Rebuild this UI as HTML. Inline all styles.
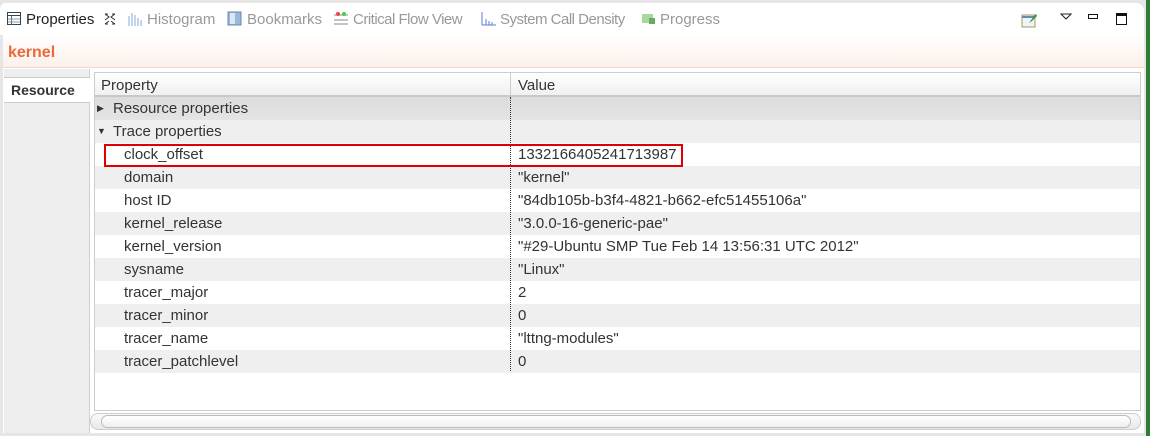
<!DOCTYPE html>
<html><head><meta charset="utf-8"><style>
*{margin:0;padding:0;box-sizing:border-box}
body{width:1150px;height:436px;background:#e6e6e6;font-family:"Liberation Sans",sans-serif;font-size:15px;color:#333;position:relative;overflow:hidden}
.panel{position:absolute;left:3px;top:3px;width:1141px;height:430px;background:#fff;border-radius:0 8px 0 0}
.green{position:absolute;left:1146px;top:0;width:4px;height:436px;background:#2e7d32}
.tab{position:absolute;top:11px;font-size:15px;color:#999;white-space:nowrap}
.title{position:absolute;left:3px;top:35px;width:1141px;height:33px;background:linear-gradient(#fff,#fcf0ea);border-bottom:1px solid #f3d8cc}
.title span{position:absolute;left:5px;top:8px;font-weight:bold;font-size:16px;color:#e8693a}
.side{position:absolute;left:4px;top:69px;width:86px;height:364px;background:#eeeeee;border-right:1px solid #d0d0d0}
.restab{position:absolute;left:0;top:8px;width:86px;height:26px;background:#fff;border-top:1px solid #ccc;border-bottom:1px solid #ccc;font-weight:bold;font-size:14px;padding:4px 0 0 7px;color:#333}
.table{position:absolute;left:94px;top:72px;width:1047px;height:339px;border:1px solid #ccc;background:#fff}
.hdr{position:absolute;left:0;top:0;width:1045px;height:24px;background:linear-gradient(#fff,#f0f0f0);border-bottom:2px solid #c8c8c8}
.hdr span{position:absolute;top:4px}
.row{position:absolute;left:0;width:1045px;height:23px}
.row span{position:absolute;top:3px;white-space:nowrap}
.g{background:#efefef}
.dg{background:linear-gradient(#dcdcdc,#e4e4e4)}
.div{position:absolute;left:415px;top:24px;height:274px;border-left:1px dotted #333}
.red{position:absolute;left:104px;top:144px;width:579px;height:23px;border:2px solid #e00000}
.scroll{position:absolute;left:90px;top:413px;width:1051px;height:17px;border:1px solid #ccc;border-radius:8px;background:linear-gradient(#fafafa,#e8e8e8)}
.thumb{position:absolute;left:10px;top:1px;width:1030px;height:13px;border:1px solid #bbb;border-radius:7px;background:linear-gradient(#fff,#f0f0f0)}
</style></head><body>
<div class="panel"></div>
<div class="green"></div>
<div style="position:absolute;left:0;top:3px;width:122px;height:32px;background:#fff;border-radius:6px 6px 0 0"></div>
<svg style="position:absolute;left:7px;top:12px" width="14" height="14"><rect x="0.5" y="0.5" width="13" height="12" fill="#fff" stroke="#345"/><line x1="0" y1="3.5" x2="14" y2="3.5" stroke="#345"/><line x1="4.5" y1="4" x2="4.5" y2="13" stroke="#567"/><line x1="1" y1="7" x2="13" y2="7" stroke="#89a"/><line x1="1" y1="10" x2="13" y2="10" stroke="#89a"/></svg>
<div class="tab" style="left:26px;color:#222">Properties</div>
<svg style="position:absolute;left:104px;top:13px" width="12" height="12"><path d="M1 1 L5 4 L1 7 M11 1 L7 4 L11 7 M1 1 H4 M8 1 H11 M1 11 L5 8 M11 11 L7 8 M1 11 H4 M8 11 H11" fill="none" stroke="#333"/></svg>
<svg style="position:absolute;left:128px;top:12px" width="14" height="14"><g stroke="#8aa8d8"><line x1="1" y1="14" x2="1" y2="4"/><line x1="4" y1="14" x2="4" y2="1"/><line x1="7" y1="14" x2="7" y2="3"/><line x1="10" y1="14" x2="10" y2="6"/><line x1="13" y1="14" x2="13" y2="8"/></g></svg>
<div class="tab" style="left:147px">Histogram</div>
<svg style="position:absolute;left:227px;top:11px" width="16" height="15"><rect x="1" y="1" width="13" height="13" fill="#9ab8dc" stroke="#6a88b0"/><rect x="3" y="2" width="5" height="11" fill="#dde8f4"/></svg>
<div class="tab" style="left:247px">Bookmarks</div>
<svg style="position:absolute;left:333px;top:11px" width="16" height="15"><g stroke="#888"><line x1="1" y1="4" x2="15" y2="4"/><line x1="1" y1="9" x2="15" y2="9"/><line x1="1" y1="13" x2="15" y2="13"/></g><circle cx="5" cy="3" r="2" fill="#e44"/><circle cx="11" cy="3" r="2" fill="#4c4"/></svg>
<div class="tab" style="left:353px;letter-spacing:-0.5px">Critical Flow View</div>
<svg style="position:absolute;left:481px;top:11px" width="16" height="15"><g stroke="#5a7ad8"><line x1="1" y1="1" x2="1" y2="14"/><line x1="1" y1="14" x2="15" y2="14"/><line x1="5" y1="14" x2="5" y2="8"/><line x1="8" y1="14" x2="8" y2="10"/><line x1="11" y1="14" x2="11" y2="11"/></g></svg>
<div class="tab" style="left:500px;letter-spacing:-0.5px">System Call Density</div>
<svg style="position:absolute;left:642px;top:13px" width="14" height="12"><rect x="0" y="1" width="11" height="9" fill="#a8d8a0"/><rect x="7" y="5" width="6" height="6" fill="#6a6"/></svg>
<div class="tab" style="left:660px">Progress</div>
<svg style="position:absolute;left:1021px;top:12px" width="17" height="16"><rect x="1" y="3" width="13" height="12" fill="#eef4fa" stroke="#a89860"/><line x1="1" y1="5" x2="14" y2="5" stroke="#6a88b0" stroke-width="2"/><path d="M8 11 L13 4 L15 2 L16 4 L11 9 Z" fill="#2a9a3a"/></svg>
<svg style="position:absolute;left:1060px;top:13px" width="12" height="8"><path d="M1 1 H11 L6 6 Z" fill="none" stroke="#222"/></svg>
<div style="position:absolute;left:1088px;top:14px;width:10px;height:5px;border:1.5px solid #111"></div>
<div style="position:absolute;left:1116px;top:13px;width:11px;height:12px;border:1.5px solid #111;border-top-width:3px"></div>
<div class="title"><span style="top:9px">kernel</span></div>
<div class="side"><div class="restab">Resource</div></div>
<div class="table">
<div class="hdr"><span style="left:6px">Property</span><span style="left:415px;border-left:1px solid #ccc;padding-left:7px;height:22px;top:0;padding-top:4px">Value</span></div>
<div class="row dg" style="top:24px"><span style="left:2px;font-size:9px;top:6px">▶</span><span style="left:18px">Resource properties</span></div>
<div class="row g" style="top:47px"><span style="left:2px;font-size:9px;top:6px">▼</span><span style="left:18px">Trace properties</span></div>
<div class="row" style="top:70px"><span style="left:29px">clock_offset</span><span style="left:423px">1332166405241713987</span></div>
<div class="row g" style="top:93px"><span style="left:29px">domain</span><span style="left:423px">"kernel"</span></div>
<div class="row" style="top:116px"><span style="left:29px">host ID</span><span style="left:423px">"84db105b-b3f4-4821-b662-efc51455106a"</span></div>
<div class="row g" style="top:139px"><span style="left:29px">kernel_release</span><span style="left:423px">"3.0.0-16-generic-pae"</span></div>
<div class="row" style="top:162px"><span style="left:29px">kernel_version</span><span style="left:423px">"#29-Ubuntu SMP Tue Feb 14 13:56:31 UTC 2012"</span></div>
<div class="row g" style="top:185px"><span style="left:29px">sysname</span><span style="left:423px">"Linux"</span></div>
<div class="row" style="top:208px"><span style="left:29px">tracer_major</span><span style="left:423px">2</span></div>
<div class="row g" style="top:231px"><span style="left:29px">tracer_minor</span><span style="left:423px">0</span></div>
<div class="row" style="top:254px"><span style="left:29px">tracer_name</span><span style="left:423px">"lttng-modules"</span></div>
<div class="row g" style="top:277px"><span style="left:29px">tracer_patchlevel</span><span style="left:423px">0</span></div>
<div class="div"></div>
</div>
<div class="red"></div>
<div class="scroll"><div class="thumb"></div></div>
</body></html>
